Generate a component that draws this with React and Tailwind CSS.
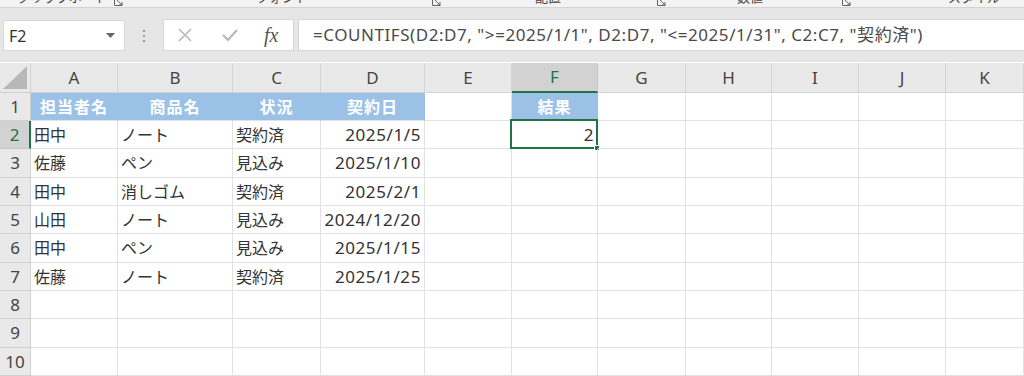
const COLS = ['A', 'B', 'C', 'D', 'E', 'F', 'G', 'H', 'I', 'J', 'K']
const HEIGHTS = [28, 28, 29, 28, 28, 29, 28, 28, 29, 28]
const ROWS = [
  ['担当者名', '商品名', '状況', '契約日', '', '結果'],
  ['田中', 'ノート', '契約済', '2025/1/5', '', '2'],
  ['佐藤', 'ペン', '見込み', '2025/1/10'],
  ['田中', '消しゴム', '契約済', '2025/2/1'],
  ['山田', 'ノート', '見込み', '2024/12/20'],
  ['田中', 'ペン', '見込み', '2025/1/15'],
  ['佐藤', 'ノート', '契約済', '2025/1/25'],
  [], [], [],
]
const font = { fontFamily: '"Noto Sans", "Noto Sans CJK JP", sans-serif' }

function RibbonLabel({ text, className }) {
  return <span className={'absolute -top-[12px] text-[13px] text-[#444] ' + className}>{text}</span>
}

function Launcher({ className }) {
  return (
    <svg className={'absolute top-0 ' + className} width="9" height="6" viewBox="0 0 9 6">
      <path d="M0.5 0 V5.5 H8.5" fill="none" stroke="#666" strokeWidth="1" />
      <path d="M3 0 L8 5 M8 2 V5 H5" fill="none" stroke="#666" strokeWidth="1" />
    </svg>
  )
}

function Toolbar() {
  return (
    <div className="flex flex-col">
      <div className="relative h-[8px] overflow-hidden bg-[#f3f3f3] border-b border-[#d4d4d4]" style={font}>
        <RibbonLabel text="クリップボード" className="left-[17px]" />
        <Launcher className="left-[114px]" />
        <RibbonLabel text="フォント" className="left-[256px]" />
        <Launcher className="left-[432px]" />
        <RibbonLabel text="配置" className="left-[535px]" />
        <Launcher className="left-[657px]" />
        <RibbonLabel text="数値" className="left-[737px]" />
        <Launcher className="left-[842px]" />
        <RibbonLabel text="スタイル" className="left-[948px]" />
      </div>
      <div className="h-[54px] bg-[#e6e6e6] flex items-start pt-[12px] pl-[3px]">
        <div className="w-[122px] h-[31px] bg-white border border-[#d6d6d6] flex items-center justify-between pl-[5px] pr-[9px]">
          <span className="text-[16px] text-[#333]" style={font}>F2</span>
          <svg width="9" height="5" viewBox="0 0 9 5"><path d="M0 0 H9 L4.5 5 Z" fill="#666" /></svg>
        </div>
        <div className="w-[38px] h-[31px] flex flex-col items-center justify-center gap-[3px]">
          <span className="w-[2px] h-[2px] bg-[#999]" />
          <span className="w-[2px] h-[2px] bg-[#999]" />
          <span className="w-[2px] h-[2px] bg-[#999]" />
        </div>
        <div className="w-[131px] h-[32px] -mt-[1px] bg-white border border-[#d6d6d6] flex items-center pl-[12px]">
          <svg width="14" height="14" viewBox="0 0 14 14" className="ml-[2px]">
            <path d="M1 1 L13 13 M13 1 L1 13" stroke="#b8b8b8" strokeWidth="1.6" />
          </svg>
          <svg width="16" height="14" viewBox="0 0 16 14" className="ml-[30px]">
            <path d="M1 7 L6 12 L15 2" fill="none" stroke="#b8b8b8" strokeWidth="2.2" />
          </svg>
          <span className="ml-[26px] text-[20px] italic text-[#555]" style={{ fontFamily: '"Liberation Serif", serif' }}>fx</span>
        </div>
        <div className="ml-[4px] flex-1 h-[32px] -mt-[1px] bg-white border border-[#d6d6d6] border-r-0 flex items-center pl-[14px]">
          <span className="text-[17px] text-[#4a4a4a] whitespace-nowrap tracking-[0.55px]" style={font}>
            =COUNTIFS(D2:D7, "&gt;=2025/1/1", D2:D7, "&lt;=2025/1/31", C2:C7, "契約済")
          </span>
        </div>
      </div>
    </div>
  )
}

export default function App() {
  const grid = 'grid grid-cols-[31px_87px_115px_88px_104px_87px_86px_88px_86px_87px_87px_1fr]'
  return (
    <div className="w-[1024px] h-[376px] overflow-hidden bg-white">
      <Toolbar />
      <div className="h-[1px] bg-white" />
      <div className={grid + ' h-[30px] bg-[#e9e9e9]'} style={font}>
        <div className="border-r border-b border-[#d0d0d0] flex items-end justify-end p-[3px]">
          <svg width="24" height="23" viewBox="0 0 24 23"><path d="M24 0 V23 H0 Z" fill="#b8b8b8" /></svg>
        </div>
        {COLS.map(c => (
          <div key={c} className={c === 'F'
            ? 'bg-[#d2d2d2] border-r border-[#c8c8c8] border-b-2 border-b-[#217346] flex items-center justify-center text-[17px] text-[#217346]'
            : 'border-r border-b border-[#d4d4d4] flex items-center justify-center text-[17px] text-[#444]'}>{c}</div>
        ))}
      </div>
      {ROWS.map((r, i) => (
        <div key={i} className={grid} style={{ height: HEIGHTS[i], ...font }}>
          <div className={i === 1
            ? 'bg-[#d2d2d2] border-r-2 border-r-[#217346] border-b border-[#c8c8c8] flex items-center justify-center text-[17px] text-[#217346]'
            : 'bg-[#e9e9e9] border-r border-b border-[#d0d0d0] flex items-center justify-center text-[17px] text-[#444]'}>{i + 1}</div>
          {COLS.map((c, j) => {
            const v = r[j] || ''
            const head = i === 0 && v
            const num = /^[0-9]/.test(v)
            return (
              <div key={c} className={'relative border-r border-b border-[#e1e1e1] flex items-center px-[3px] '
                + (head ? 'bg-[#9bc2e6] border-r-[#9bc2e6] justify-center font-bold text-white tracking-[1px] text-[16px] ' : '')
                + (num ? 'justify-end text-[#333] text-[17px] tracking-[0.6px] ' : 'text-[#333] text-[16px] ')}>
                {v}
                {i === 1 && c === 'F' && (
                  <div className="absolute -left-[2px] -top-[2px] -right-[1px] -bottom-[1px] border-2 border-[#217346]">
                    <div className="absolute -right-[4px] -bottom-[4px] w-[6px] h-[6px] bg-[#217346] border border-white" />
                  </div>
                )}
              </div>
            )
          })}
        </div>
      ))}
    </div>
  )
}
